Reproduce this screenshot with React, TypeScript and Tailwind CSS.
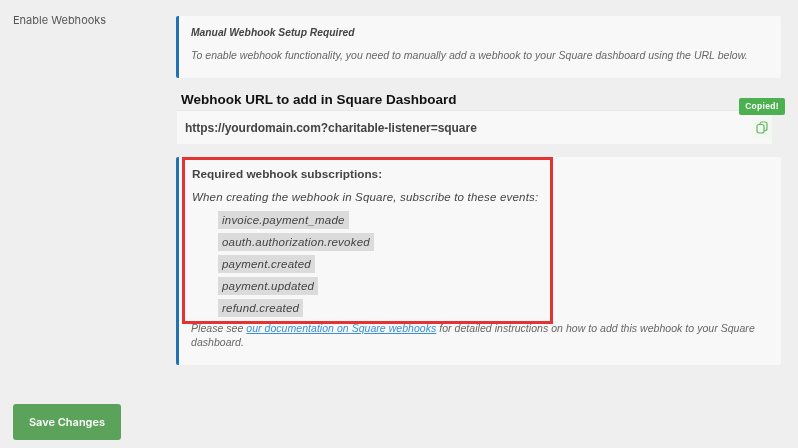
import React from 'react';

const events = [
  'invoice.payment_made',
  'oauth.authorization.revoked',
  'payment.created',
  'payment.updated',
  'refund.created',
];

const CopyIcon = () => (
  <svg width="12" height="13" viewBox="0 0 12 13" fill="none" stroke="#5cb85c" strokeWidth="1.2">
    <rect x="4" y="1" width="7" height="8.5" rx="2" />
    <rect x="1" y="3.5" width="7" height="8.5" rx="2" fill="#f5f8f4" />
  </svg>
);

export default function App() {
  return (
    <div className="w-[798px] h-[448px] overflow-hidden bg-[#efefef] font-['Liberation_Sans',Arial,sans-serif] flex flex-col pl-[13px] pt-4 blur-[0.4px]">
      <div className="flex h-[349px]">
        <div className="w-[163px] shrink-0 font-['Inter',sans-serif] text-[11px] leading-[7px] pt-[1px] text-[#555]">Enable Webhooks</div>
        <div className="w-[605px] shrink-0 flex flex-col">
          <div className="h-[62px] bg-[#f8f8f8] rounded-[2px] border-l-[3px] border-[#2271b1] pl-3 pt-[11px] italic text-[#666]">
            <p className="text-[10.3px] leading-3 font-bold text-[#444]">Manual Webhook Setup Required</p>
            <p className="text-[10.5px] leading-3 mt-[10px] tracking-[0.02px]">To enable webhook functionality, you need to manually add a webhook to your Square dashboard using the URL below.</p>
          </div>
          <h2 className="ml-[5px] mt-[15px] text-[13.5px] leading-[14px] font-bold text-[#111]">Webhook URL to add in Square Dashboard</h2>
          <div className="relative ml-px mt-[3px] w-[595px] h-[34px] bg-[#f8f8f8] border-t border-[#e8e8e8] pl-2 flex items-center justify-between">
            <span className="text-[12px] font-bold tracking-[-0.04px] text-[#444]">https://yourdomain.com?charitable-listener=square</span>
            <span className="w-5 h-[22px] bg-[#f4f8f3] flex items-center justify-center"><CopyIcon /></span>
            <span className="absolute -top-[13px] -right-[13px] w-[46px] h-[17px] rounded-[2px] bg-[#4caf50] text-white text-[8.5px] font-bold tracking-[0.3px] flex items-center justify-center">Copied!</span>
          </div>
          <div className="mt-[13px] h-[208px] bg-[#f8f8f8] rounded-[2px] border-l-[3px] border-[#2271b1] pl-[3px] flex flex-col">
            <div className="w-[371px] h-[167px] border-[3px] border-[#e53333] pl-[7px] pt-[7px] text-[#444]">
              <p className="text-[11.8px] leading-[14px] font-bold">Required webhook subscriptions:</p>
              <p className="mt-[9px] text-[11.5px] leading-[14px] italic tracking-[0.18px] whitespace-nowrap">When creating the webhook in Square, subscribe to these events:</p>
              <ul className="mt-[7px] ml-[26px] flex flex-col items-start gap-1">
                {events.map((e) => (
                  <li key={e} className="h-[18px] px-[4px] bg-[#dbdbdb] text-[11.5px] leading-[18px] italic tracking-[0.22px]">{e}</li>
                ))}
              </ul>
            </div>
            <p className="ml-[9px] mt-[-3px] w-[590px] text-[10.5px] leading-[14px] italic tracking-[0.04px] text-[#666]">
              Please see <a className="text-[#3a90d8] underline" href="#">our documentation on Square webhooks</a> for detailed instructions on how to add this webhook to your Square dashboard.
            </p>
          </div>
        </div>
      </div>
      <button className="mt-[39px] w-[108px] h-9 rounded-[3px] bg-[#5ba35a] text-white text-[11px] font-semibold font-['Inter',sans-serif]">Save Changes</button>
    </div>
  );
}
